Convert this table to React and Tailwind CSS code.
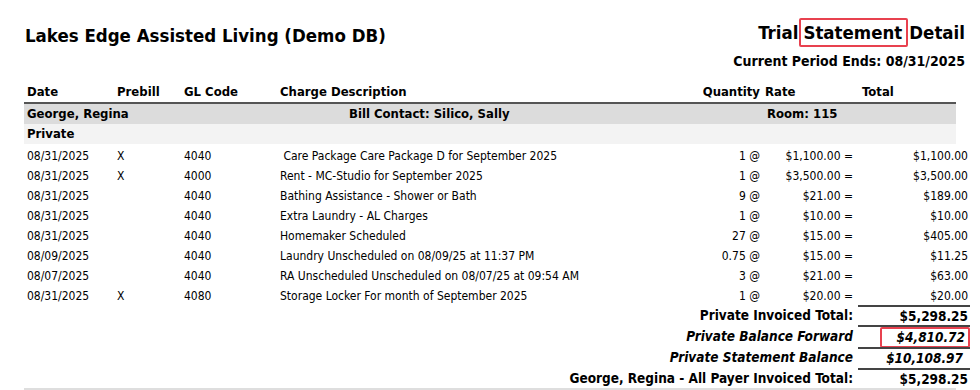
import React from 'react';

const rows = [
  { date: '08/31/2025', prebill: 'X', gl: '4040', desc: '\u00a0Care Package Care Package D for September 2025', qty: '1', rate: '$1,100.00', total: '$1,100.00' },
  { date: '08/31/2025', prebill: 'X', gl: '4000', desc: 'Rent - MC-Studio for September 2025', qty: '1', rate: '$3,500.00', total: '$3,500.00' },
  { date: '08/31/2025', prebill: '', gl: '4040', desc: 'Bathing Assistance - Shower or Bath', qty: '9', rate: '$21.00', total: '$189.00' },
  { date: '08/31/2025', prebill: '', gl: '4040', desc: 'Extra Laundry - AL Charges', qty: '1', rate: '$10.00', total: '$10.00' },
  { date: '08/31/2025', prebill: '', gl: '4040', desc: 'Homemaker Scheduled', qty: '27', rate: '$15.00', total: '$405.00' },
  { date: '08/09/2025', prebill: '', gl: '4040', desc: 'Laundry Unscheduled on 08/09/25 at 11:37 PM', qty: '0.75', rate: '$15.00', total: '$11.25' },
  { date: '08/07/2025', prebill: '', gl: '4040', desc: 'RA Unscheduled Unscheduled on 08/07/25 at 09:54 AM', qty: '3', rate: '$21.00', total: '$63.00' },
  { date: '08/31/2025', prebill: 'X', gl: '4080', desc: 'Storage Locker For month of September 2025', qty: '1', rate: '$20.00', total: '$20.00' },
];

const grid = 'grid grid-cols-[90px_67px_96px_420px_65px_94px_116px]';

export default function App() {
  return (
    <div className="w-[980px] h-[390px] overflow-hidden bg-white text-black font-['DejaVu_Sans_Condensed','DejaVu_Sans',sans-serif]">
      {/* HEADER */}
      <div className="flex justify-between items-start pl-[25px] pr-[15px] pt-[18px]">
        <h1 className="text-[18.5px] font-bold leading-[29px] mt-[3px]">Lakes Edge Assisted Living (Demo DB)</h1>
        <div className="flex flex-col items-end">
          <div className="text-[18.5px] font-bold leading-[25px] flex items-center">
            <span>Trial</span>
            <span className="border-2 border-[#e8414f] rounded-[2px] pl-[2px] pr-[4px] mx-[1px]">Statement</span>
            <span>Detail</span>
          </div>
          <div className="text-[14px] font-bold leading-[20px] mt-[4px]">Current Period Ends: 08/31/2025</div>
        </div>
      </div>

      <div className="mx-[24px] mt-[11px]">
        {/* COLUMN HEADERS */}
        <div className={`${grid} text-[13px] font-bold h-[22px] items-center border-b-2 border-[#555]`}>
          <div className="pl-[3px]">Date</div>
          <div className="pl-[3px]">Prebill</div>
          <div className="pl-[3px]">GL Code</div>
          <div className="pl-[3px]">Charge Description</div>
          <div className="text-right pr-[2px]">Quantity</div>
          <div className="pl-[3px]">Rate</div>
          <div className="pl-[6px]">Total</div>
        </div>

        {/* RESIDENT */}
        <div className={`${grid} text-[13px] font-bold h-[20px] items-center bg-[#dcdcdc]`}>
          <div className="col-span-3 pl-[3px]">George, Regina</div>
          <div className="pl-[72px]">Bill Contact: Silico, Sally</div>
          <div />
          <div className="col-span-2 pl-[5px]">Room: 115</div>
        </div>
        <div className="text-[13px] font-bold h-[20px] flex items-center bg-[#f3f3f3] pl-[3px]">Private</div>

        {/* CHARGES */}
        <div className="pt-[2px]">
          {rows.map((r, i) => (
            <div key={i} className={`${grid} text-[12px] h-[20px] items-center`}>
              <div className="pl-[3px]">{r.date}</div>
              <div className="pl-[3px]">{r.prebill}</div>
              <div className="pl-[3px]">{r.gl}</div>
              <div className="pl-[3px] whitespace-nowrap">{r.desc}</div>
              <div className="text-right pr-[2px]">{r.qty} @</div>
              <div className="text-right pr-[3px]">{r.rate} =</div>
              <div className="text-right pr-[4px]">{r.total}</div>
            </div>
          ))}
        </div>

        {/* TOTALS */}
        <div className={`${grid} text-[13.5px] font-bold -mt-[1px]`}>
          <div className="col-span-6 text-right pr-[3px] h-[20px] leading-[20px]">Private Invoiced Total:</div>
          <div className="mx-[2px] border-t-2 border-[#444] text-right pr-[2px] h-[20px] leading-[18px]">$5,298.25</div>

          <div className="col-span-6 text-right pr-[3px] h-[22px] leading-[23px] italic">Private Balance Forward</div>
          <div className="mx-[2px] border-t-2 border-[#444] h-[22px] flex justify-end">
            <div className="w-[90px] h-[21px] border-2 border-[#e8414f] rounded-[2px] text-right pr-[3px] italic leading-[17px]">$4,810.72</div>
          </div>

          <div className="col-span-6 text-right pr-[3px] h-[21px] leading-[21px] italic">Private Statement Balance</div>
          <div className="mx-[2px] border-t-2 border-[#444] text-right pr-[7px] h-[21px] leading-[19px] italic">$10,108.97</div>

          <div className="col-span-6 text-right pr-[3px] h-[20px] leading-[20px]">George, Regina - All Payer Invoiced Total:</div>
          <div className="mx-[2px] border-t-2 border-[#444] text-right pr-[2px] h-[20px] leading-[18px]">$5,298.25</div>
        </div>
        <div className="h-[3px] bg-[#dedede]" />
      </div>
    </div>
  );
}
